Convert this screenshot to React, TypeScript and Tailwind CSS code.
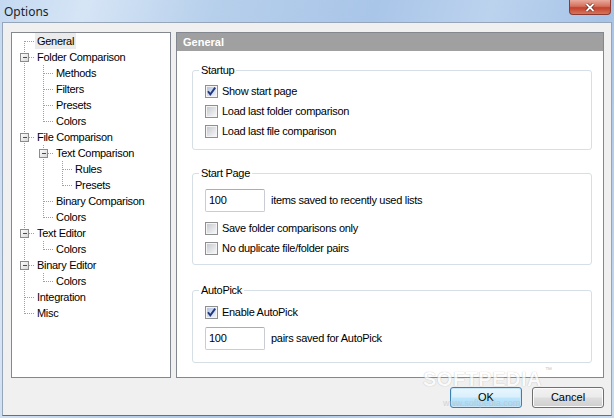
import React from 'react';

type Cell = 'pipe' | 'tee' | 'ell' | 'first';

interface TreeRow {
  label: string;
  cells: Cell[];
  box?: boolean;
  selected?: boolean;
}

const treeRows: TreeRow[] = [
  { label: 'General', cells: ['first'], selected: true },
  { label: 'Folder Comparison', cells: ['tee'], box: true },
  { label: 'Methods', cells: ['pipe', 'tee'] },
  { label: 'Filters', cells: ['pipe', 'tee'] },
  { label: 'Presets', cells: ['pipe', 'tee'] },
  { label: 'Colors', cells: ['pipe', 'ell'] },
  { label: 'File Comparison', cells: ['tee'], box: true },
  { label: 'Text Comparison', cells: ['pipe', 'tee'], box: true },
  { label: 'Rules', cells: ['pipe', 'pipe', 'tee'] },
  { label: 'Presets', cells: ['pipe', 'pipe', 'ell'] },
  { label: 'Binary Comparison', cells: ['pipe', 'tee'] },
  { label: 'Colors', cells: ['pipe', 'ell'] },
  { label: 'Text Editor', cells: ['tee'], box: true },
  { label: 'Colors', cells: ['pipe', 'ell'] },
  { label: 'Binary Editor', cells: ['tee'], box: true },
  { label: 'Colors', cells: ['pipe', 'ell'] },
  { label: 'Integration', cells: ['tee'] },
  { label: 'Misc', cells: ['ell'] },
];

// one 19x16 slot of tree connector lines
const TreeCell: React.FC<{ kind: Cell; box?: boolean }> = ({ kind, box }) => {
  const dots = { stroke: '#a0a0a0', strokeWidth: 1, strokeDasharray: '1 1' };
  return (
    <svg width="19" height="16" viewBox="0 0 19 16" className="shrink-0" shapeRendering="crispEdges">
      <defs>
        <linearGradient id="exp-grad" x1="0" y1="0" x2="1" y2="1">
          <stop offset="0" stopColor="#ffffff" />
          <stop offset="1" stopColor="#d8d8d8" />
        </linearGradient>
      </defs>
      {kind === 'pipe' && <line x1="9.5" y1="0" x2="9.5" y2="16" {...dots} />}
      {kind === 'tee' && <line x1="9.5" y1="0" x2="9.5" y2="16" {...dots} />}
      {kind === 'ell' && <line x1="9.5" y1="0" x2="9.5" y2="9" {...dots} />}
      {kind === 'first' && <line x1="9.5" y1="8" x2="9.5" y2="16" {...dots} />}
      {kind !== 'pipe' && <line x1="10" y1="8.5" x2="19" y2="8.5" {...dots} />}
      {box && (
        <>
          <rect x="5.5" y="4.5" width="8" height="8" fill="url(#exp-grad)" stroke="#8c8c8c" />
          <line x1="7.5" y1="8.5" x2="11.5" y2="8.5" stroke="#2a4aa6" strokeWidth="1" />
        </>
      )}
    </svg>
  );
};

const CheckBox: React.FC<{ checked?: boolean }> = ({ checked }) => (
  <svg width="13" height="13" viewBox="0 0 13 13" className="shrink-0">
    <defs>
      <linearGradient id="cb-off" x1="0" y1="0" x2="1" y2="1">
        <stop offset="0" stopColor="#c6cad0" />
        <stop offset="1" stopColor="#f6f6f6" />
      </linearGradient>
      <linearGradient id="cb-on" x1="0" y1="0" x2="1" y2="1">
        <stop offset="0" stopColor="#b3c4e2" />
        <stop offset="1" stopColor="#eef3fb" />
      </linearGradient>
    </defs>
    <rect x="0.5" y="0.5" width="12" height="12" fill="#f4f4f4" stroke="#8e8f8f" />
    <rect x="2" y="2" width="9" height="9" fill={checked ? 'url(#cb-on)' : 'url(#cb-off)'} />
    {checked && <path d="M3 6.2 L5.3 9.3 L10.2 2.6" stroke="#22377f" strokeWidth="1.9" fill="none" />}
  </svg>
);

const CheckRow: React.FC<{ label: string; checked?: boolean }> = ({ label, checked }) => (
  <div className="flex h-[13px] items-center gap-[4px] whitespace-nowrap leading-[13px]">
    <CheckBox checked={checked} />
    <span>{label}</span>
  </div>
);

const NumberRow: React.FC<{ value: string; label: string }> = ({ value, label }) => (
  <div className="flex h-[23px] items-center">
    <div className="flex h-[23px] w-[60px] items-center rounded-[2px] border border-[#c9ccd3] border-t-[#abadb3] bg-white pl-[3px]">
      {value}
    </div>
    <span className="ml-[6px] whitespace-nowrap">{label}</span>
  </div>
);

const Group: React.FC<{ title: string; className: string; children: React.ReactNode }> = ({ title, className, children }) => (
  <div className={`relative rounded-[3px] border border-[#d5dfe5] pl-[12px] ${className}`}>
    <span className="absolute -top-[7px] left-[6px] bg-white px-[2px] leading-[13px]">{title}</span>
    {children}
  </div>
);

export default function App() {
  return (
    <div className="relative flex h-[418px] w-[614px] flex-col overflow-hidden bg-[linear-gradient(105deg,#c4d9f1_0%,#d6e5f6_12%,#b6cfeb_30%,#a9c5e8_52%,#bcd3ee_68%,#a6c3e7_84%,#c9dcf2_100%)] font-['Liberation_Sans',Arial,sans-serif] text-[11px] tracking-[-0.3px] text-black">
      {/* Title bar */}
      <div className="flex h-[22px] shrink-0 items-start">
        <span className="ml-[4px] mt-[3px] font-['Noto_Sans',sans-serif] text-[12px] tracking-normal text-[#1e1e1e]">Options</span>
        <div className="ml-auto mr-[3px] flex h-[15px] w-[42px] items-center justify-center rounded-b-[4px] border border-t-0 border-[#8a3a30] bg-[linear-gradient(#e8aa9c,#d4705d_45%,#c3412b_55%,#d3765d)]">
          <svg width="10" height="9" viewBox="0 0 10 9">
            <path d="M1.5 1 L8.5 8 M8.5 1 L1.5 8" stroke="#6b1f16" strokeWidth="3.2" />
            <path d="M1.5 1 L8.5 8 M8.5 1 L1.5 8" stroke="#ffffff" strokeWidth="1.8" />
          </svg>
        </div>
      </div>

      {/* Client area */}
      <div className="mx-[2px] mb-[2px] flex h-[394px] flex-col border border-[#97a5b8] border-b-[#6e6e6e] bg-[#f0f0f0] pl-[8px] pr-[7px] pt-[9px]">
        <div className="flex h-[346px] gap-[5px]">
          {/* Tree */}
          <div className="flex h-[346px] w-[160px] flex-col border border-[#828790] bg-white pl-[3px]">
            {treeRows.map((row, i) => (
              <div key={i} className="flex h-[16px] items-center">
                {row.cells.map((c, j) => (
                  <TreeCell key={j} kind={c} box={row.box && j === row.cells.length - 1} />
                ))}
                <span className={`ml-[1px] whitespace-nowrap px-[2px] leading-[16px] ${row.selected ? 'bg-[#ebebeb]' : ''}`}>
                  {row.label}
                </span>
              </div>
            ))}
          </div>

          {/* Page */}
          <div className="flex h-[346px] w-[428px] flex-col border border-[#828790] bg-white">
            <div className="flex h-[18px] items-center bg-[#a0a0a0] pl-[6px] font-bold tracking-normal text-white">General</div>
            <div className="flex flex-col pl-[15px] pr-[11px] pt-[19px]">
              <Group title="Startup" className="h-[80px] pt-[14px]">
                <div className="flex flex-col gap-[7px]">
                  <CheckRow label="Show start page" checked />
                  <CheckRow label="Load last folder comparison" />
                  <CheckRow label="Load last file comparison" />
                </div>
              </Group>

              <Group title="Start Page" className="mt-[23px] h-[92px] pt-[15px]">
                <NumberRow value="100" label="items saved to recently used lists" />
                <div className="mt-[10px] flex flex-col gap-[7px]">
                  <CheckRow label="Save folder comparisons only" />
                  <CheckRow label="No duplicate file/folder pairs" />
                </div>
              </Group>

              <Group title="AutoPick" className="mt-[25px] h-[73px] pt-[15px]">
                <CheckRow label="Enable AutoPick" checked />
                <div className="mt-[8px]">
                  <NumberRow value="100" label="pairs saved for AutoPick" />
                </div>
              </Group>
            </div>
          </div>
        </div>

        {/* Buttons */}
        <div className="mt-[9px] flex justify-end gap-[10px] tracking-normal">
          <button className="flex h-[21px] w-[72px] items-center justify-center rounded-[3px] border border-[#3c7fb1] bg-[linear-gradient(#eaf6fd_0%,#d9f0fc_48%,#bee6fd_52%,#a7d9f5_100%)] shadow-[inset_0_0_0_1px_#c9e7f8]">
            OK
          </button>
          <button className="flex h-[21px] w-[72px] items-center justify-center rounded-[3px] border border-[#707070] bg-[linear-gradient(#f2f2f2_0%,#ebebeb_48%,#dddddd_52%,#cfcfcf_100%)] shadow-[inset_0_0_0_1px_#fbfbfb]">
            Cancel
          </button>
        </div>
      </div>

      {/* watermark */}
      <span className="pointer-events-none absolute left-[423px] top-[364px] text-[20px] font-bold tracking-[0.5px] text-white opacity-70 [text-shadow:0_0_1px_#8f8f8f]">
        SOFTPEDIA
      </span>
      <span className="pointer-events-none absolute left-[545px] top-[365px] text-[7px] tracking-normal text-[#c8c8c8]">™</span>
      <span className="pointer-events-none absolute left-[443px] top-[397px] text-[9px] tracking-normal text-[#c0c0c0] opacity-60">
        www.softpedia.com
      </span>
    </div>
  );
}
